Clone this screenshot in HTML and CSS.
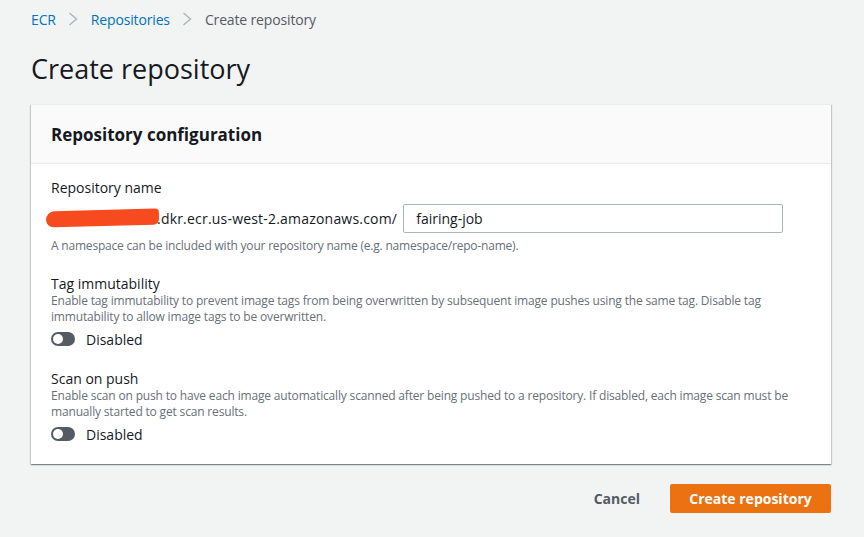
FILE: index.html
```html
<!DOCTYPE html>
<html lang="en">
<head>
<meta charset="utf-8">
<title>Create repository</title>
<link rel="stylesheet" href="styles.css">
</head>
<body>
<div class="page">
  <nav class="breadcrumbs">
    <a class="crumb-link">ECR</a>
    <svg class="chev" width="10" height="14" viewBox="0 0 10 14"><path d="M1.5 1 L8.5 7 L1.5 13" fill="none" stroke="#aab7b8" stroke-width="1.4"/></svg>
    <a class="crumb-link">Repositories</a>
    <svg class="chev" width="10" height="14" viewBox="0 0 10 14"><path d="M1.5 1 L8.5 7 L1.5 13" fill="none" stroke="#aab7b8" stroke-width="1.4"/></svg>
    <span class="crumb-current">Create repository</span>
  </nav>
  <h1 class="title">Create repository</h1>

  <section class="card">
    <header class="card-header"><h2>Repository configuration</h2></header>
    <div class="card-body">
      <div class="field">
        <div class="label">Repository name</div>
        <div class="name-row">
          <span class="prefix"><span class="redact"></span><span class="prefix-text">.dkr.ecr.us-west-2.amazonaws.com/</span></span>
          <div class="input">fairing-job</div>
        </div>
        <div class="hint">A namespace can be included with your repository name (e.g. namespace/repo-name).</div>
      </div>

      <div class="field">
        <div class="label">Tag immutability</div>
        <div class="desc">Enable tag immutability to prevent image tags from being overwritten by subsequent image pushes using the same tag. Disable tag immutability to allow image tags to be overwritten.</div>
        <div class="toggle-row"><span class="toggle"><span class="knob"></span></span><span class="toggle-label">Disabled</span></div>
      </div>

      <div class="field">
        <div class="label">Scan on push</div>
        <div class="desc">Enable scan on push to have each image automatically scanned after being pushed to a repository. If disabled, each image scan must be manually started to get scan results.</div>
        <div class="toggle-row"><span class="toggle"><span class="knob"></span></span><span class="toggle-label">Disabled</span></div>
      </div>
    </div>
  </section>

  <div class="actions">
    <button class="btn-link">Cancel</button>
    <button class="btn-primary">Create repository</button>
  </div>
</div>
</body>
</html>
```
FILE: styles.css
```css
* { box-sizing: border-box; }
html, body { margin: 0; padding: 0; }
body {
  background: #f2f3f3;
  font-family: "Open Sans", "Noto Sans", sans-serif;
  color: #16191f;
  width: 864px;
  height: 537px;
  overflow: hidden;
}
.page { padding: 9px 33px 0 31px; }
.breadcrumbs {
  display: flex;
  align-items: center;
  height: 20px;
  font-size: 14px;
  letter-spacing: -0.15px;
}
.crumb-link { color: #0073bb; }
.chev { margin: 0 13px 0 12px; }
.crumb-current { color: #545b64; }
.title {
  margin: 22px 0 0 0;
  font-size: 27px;
  font-weight: 400;
  line-height: 36px;
  height: 36px;
}
.card {
  margin-top: 17px;
  background: #fff;
  box-shadow: 0 1px 1px 0 rgba(0,28,36,.3), 1px 1px 1px 0 rgba(0,28,36,.15), -1px 1px 1px 0 rgba(0,28,36,.15);
  border-top: 1px solid #eaeded;
}
.card-header {
  background: #fafafa;
  border-bottom: 1px solid #eaeded;
  height: 59px;
  padding: 0 20px;
  display: flex;
  align-items: center;
}
.card-header h2 {
  margin: 0;
  font-size: 17px;
  font-weight: 700;
}
.card-body { padding: 15px 20px 20px; }
.field + .field { margin-top: 21px; }
.label { font-size: 14px; line-height: 18px; }
.name-row {
  display: flex;
  align-items: center;
  margin-top: 7px;
}
.prefix {
  position: relative;
  font-size: 14px;
  padding-left: 111px;
  margin-left: -5px;
  letter-spacing: 0.2px;
}
.redact {
  position: absolute;
  left: 0;
  top: 1px;
  width: 113px;
  height: 16px;
  background: #f84a1f;
  border-radius: 9px 4px 6px 8px;
  transform: rotate(-1.5deg);
}
.input {
  margin-left: 6px;
  width: 380px;
  height: 29px;
  border: 1px solid #aab7b8;
  border-radius: 2px;
  padding: 0 12px;
  font-size: 14px;
  line-height: 27px;
}
.hint {
  margin-top: 5px;
  font-size: 12px;
  letter-spacing: -0.2px;
  color: #687078;
  line-height: 16px;
}
.desc {
  font-size: 12px;
  letter-spacing: -0.17px;
  color: #687078;
  line-height: 16px;
}
.toggle-row {
  display: flex;
  align-items: center;
  margin-top: 4px;
  height: 20px;
}
.toggle {
  width: 24px;
  height: 14px;
  border-radius: 7px;
  background: #545b64;
  position: relative;
}
.knob {
  position: absolute;
  left: 2px;
  top: 2px;
  width: 10px;
  height: 10px;
  border-radius: 50%;
  background: #fff;
}
.toggle-label { margin-left: 11px; font-size: 14px; }
.actions {
  display: flex;
  justify-content: flex-end;
  align-items: center;
  margin-top: 20px;
  gap: 30px;
}
.btn-link {
  background: none;
  border: none;
  font-family: inherit;
  font-size: 14px;
  font-weight: 700;
  color: #545b64;
  padding: 0;
}
.btn-primary {
  background: #ec7211;
  color: #fff;
  border: none;
  border-radius: 2px;
  height: 29px;
  width: 161px;
  font-family: inherit;
  font-size: 14px;
  font-weight: 700;
}
```
